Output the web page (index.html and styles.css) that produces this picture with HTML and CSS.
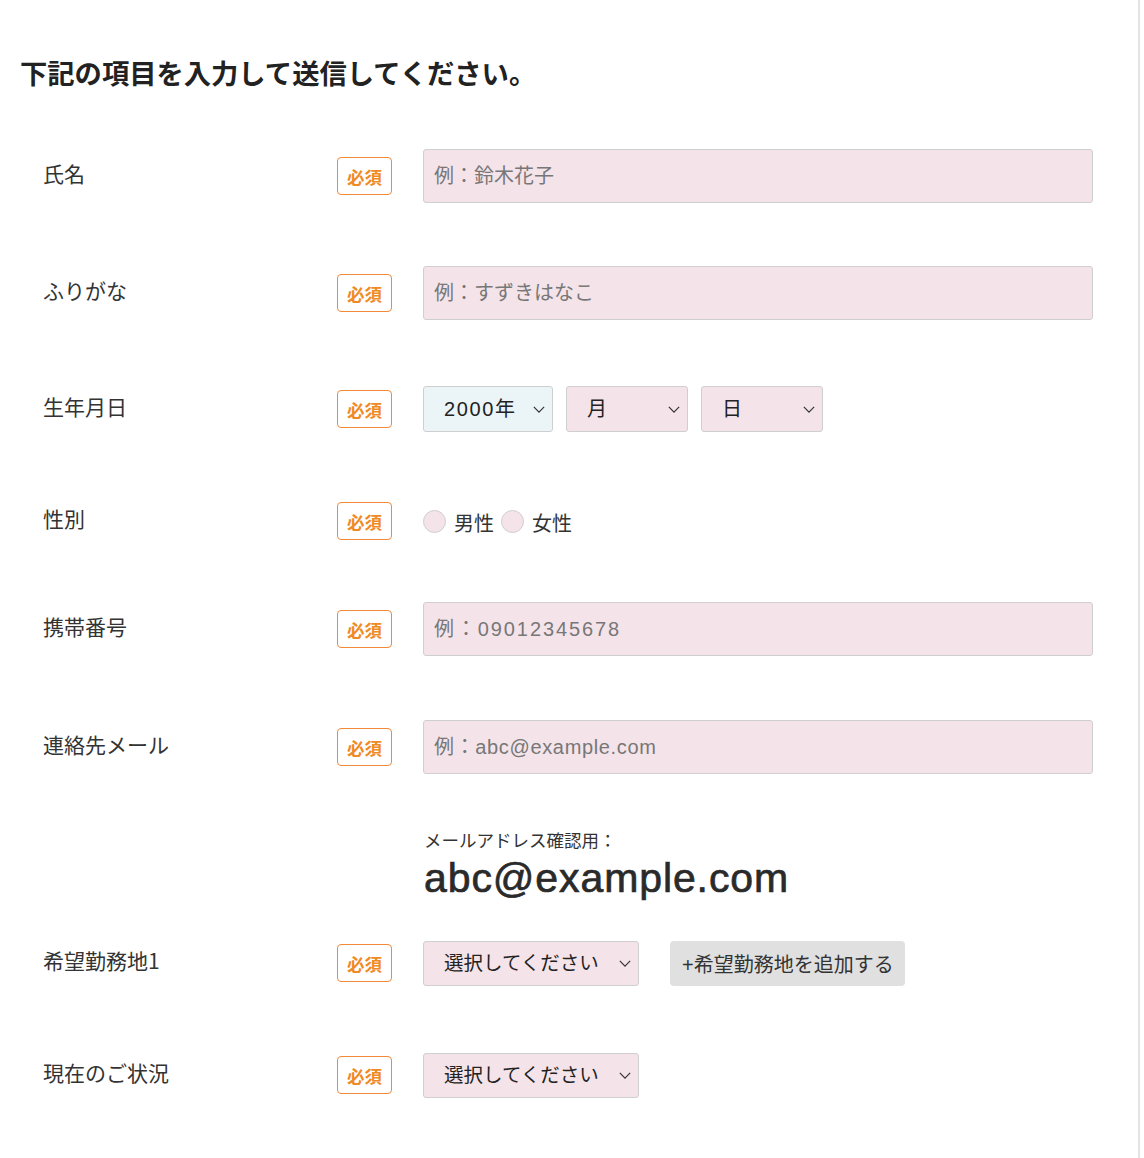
FILE: index.html
```html
<!DOCTYPE html>
<html lang="ja">
<head>
<meta charset="utf-8">
<title>フォーム</title>
<link rel="stylesheet" href="styles.css">
</head>
<body>
<div class="page">
  <h1 class="title">下記の項目を入力して送信してください。</h1>
  <form class="form">
    <div class="label">氏名</div>
    <div class="badge-cell"><span class="badge">必須</span></div>
    <div class="field"><input class="text-input" type="text" placeholder="例：鈴木花子"></div>

    <div class="label">ふりがな</div>
    <div class="badge-cell"><span class="badge">必須</span></div>
    <div class="field"><input class="text-input" type="text" placeholder="例：すずきはなこ"></div>

    <div class="label">生年月日</div>
    <div class="badge-cell"><span class="badge">必須</span></div>
    <div class="field field-inline">
      <div class="select-wrap select-year">
        <select class="select select-blue"><option>2000年</option></select>
        <svg class="chevron" viewBox="0 0 14 8" width="14" height="8"><path d="M1 1l6 6 6-6" fill="none" stroke="#333" stroke-width="1.4"/></svg>
      </div>
      <div class="select-wrap select-md">
        <select class="select"><option>月</option></select>
        <svg class="chevron" viewBox="0 0 14 8" width="14" height="8"><path d="M1 1l6 6 6-6" fill="none" stroke="#333" stroke-width="1.4"/></svg>
      </div>
      <div class="select-wrap select-md">
        <select class="select"><option>日</option></select>
        <svg class="chevron" viewBox="0 0 14 8" width="14" height="8"><path d="M1 1l6 6 6-6" fill="none" stroke="#333" stroke-width="1.4"/></svg>
      </div>
    </div>

    <div class="label">性別</div>
    <div class="badge-cell"><span class="badge">必須</span></div>
    <div class="field radios">
      <label class="radio"><span class="radio-dot"></span><span class="radio-text">男性</span></label>
      <label class="radio"><span class="radio-dot"></span><span class="radio-text">女性</span></label>
    </div>

    <div class="label">携帯番号</div>
    <div class="badge-cell"><span class="badge">必須</span></div>
    <div class="field"><input class="text-input tel" type="tel" placeholder="例：09012345678"></div>

    <div class="label">連絡先メール</div>
    <div class="badge-cell"><span class="badge">必須</span></div>
    <div class="field"><input class="text-input email" type="email" placeholder="例：abc@example.com"></div>

    <div class="confirm">
      <div class="confirm-caption">メールアドレス確認用：</div>
      <div class="confirm-mail">abc@example.com</div>
    </div>

    <div class="label">希望勤務地1</div>
    <div class="badge-cell"><span class="badge">必須</span></div>
    <div class="field field-inline wide-gap">
      <div class="select-wrap select-lg">
        <select class="select"><option>選択してください</option></select>
        <svg class="chevron" viewBox="0 0 14 8" width="14" height="8"><path d="M1 1l6 6 6-6" fill="none" stroke="#333" stroke-width="1.4"/></svg>
      </div>
      <button class="add-btn" type="button">+希望勤務地を追加する</button>
    </div>

    <div class="label">現在のご状況</div>
    <div class="badge-cell"><span class="badge">必須</span></div>
    <div class="field field-inline">
      <div class="select-wrap select-lg">
        <select class="select"><option>選択してください</option></select>
        <svg class="chevron" viewBox="0 0 14 8" width="14" height="8"><path d="M1 1l6 6 6-6" fill="none" stroke="#333" stroke-width="1.4"/></svg>
      </div>
    </div>
  </form>
</div>
</body>
</html>
```

FILE: styles.css
```css
html, body {
  margin: 0;
  padding: 0;
  background: #fff;
}

body {
  font-family: "Liberation Sans", "Noto Sans CJK JP", sans-serif;
  color: #333;
}

.page {
  box-sizing: border-box;
  width: 1140px;
  min-height: 100vh;
  border-right: 2px solid #e4e4e4;
  padding: 52px 0 0 20px;
}

.title {
  margin: 0 0 26px;
  font-size: 27.3px;
  line-height: 40px;
  font-weight: 700;
  color: #222;
  font-family: "Noto Sans CJK JP", sans-serif;
}

.form {
  display: grid;
  margin-left: 23px;
  grid-template-columns: 294px 86px 670px;
  grid-template-rows: 116px 118px 114px 110px 106px 130px 94px 114px 110px;
}

.label {
  display: flex;
  align-items: center;
  padding-bottom: 6px;
  font-size: 21px;
  color: #333;
  font-family: "Noto Sans CJK JP", sans-serif;
}

.badge-cell {
  display: flex;
  align-items: center;
}

.badge {
  box-sizing: border-box;
  width: 55px;
  height: 38px;
  border: 1px solid #f0893a;
  border-radius: 4px;
  display: flex;
  align-items: center;
  justify-content: center;
  color: #f08a24;
  font-weight: 700;
  font-size: 17.5px;
  font-family: "Noto Sans CJK JP", sans-serif;
}

.field {
  display: flex;
  align-items: center;
}

.field-inline {
  gap: 13px;
}

.wide-gap {
  gap: 31px;
}

.text-input {
  box-sizing: border-box;
  width: 670px;
  height: 54px;
  margin: 0;
  padding: 0 10px;
  border: 1px solid #cfcfcf;
  border-radius: 3px;
  background: #f4e4ea;
  font-family: "Liberation Sans", "Noto Sans CJK JP", sans-serif;
  font-size: 20px;
  color: #333;
  outline: none;
}

.text-input::placeholder {
  color: #777;
  opacity: 1;
}

.email::placeholder {
  letter-spacing: 0.65px;
}

.tel::placeholder {
  letter-spacing: 1.9px;
}

.select-wrap {
  position: relative;
  height: 46px;
}

.select-year { width: 130px; }
.select-md { width: 122px; }
.select-lg { width: 216px; height: 45px; }

.select {
  -webkit-appearance: none;
  appearance: none;
  box-sizing: border-box;
  width: 100%;
  height: 100%;
  margin: 0;
  padding: 0 0 0 20px;
  border: 1px solid #cfcfcf;
  border-radius: 3px;
  background: #f4e4ea;
  font-family: "Liberation Sans", "Noto Sans CJK JP", sans-serif;
  font-size: 20px;
  color: #222;
  outline: none;
}

.select-lg .select {
  font-size: 19.5px;
}

.select-blue {
  background: #ebf4f7;
  letter-spacing: 1.6px;
}

.chevron {
  position: absolute;
  right: 8px;
  top: 50%;
  margin-top: -3px;
  width: 12px;
  height: 7px;
  pointer-events: none;
}

.radios {
  gap: 7px;
}

.radio {
  display: flex;
  align-items: center;
  gap: 8px;
  font-size: 20px;
  font-family: "Noto Sans CJK JP", sans-serif;
  color: #333;
}

.radio-text {
  padding-top: 3px;
}

.radio-dot {
  box-sizing: border-box;
  width: 23px;
  height: 23px;
  border-radius: 50%;
  border: 1px solid #cfcfcf;
  background: #f4e4ea;
}

.add-btn {
  box-sizing: border-box;
  width: 235px;
  height: 45px;
  margin: 0;
  padding: 0 0 0 12px;
  text-align: left;
  border: none;
  border-radius: 4px;
  background: #e0e0e0;
  font-family: "Liberation Sans", "Noto Sans CJK JP", sans-serif;
  font-size: 20px;
  color: #333;
}

.confirm {
  grid-column: 3;
  padding-top: 18px;
  padding-left: 1px;
}

.confirm-caption {
  font-size: 17.5px;
  line-height: 20px;
  color: #333;
  font-family: "Noto Sans CJK JP", sans-serif;
}

.confirm-mail {
  margin-top: 6px;
  font-size: 41px;
  line-height: 44px;
  letter-spacing: 0.9px;
  color: #2a2a2a;
  font-family: "Liberation Sans", sans-serif;
  -webkit-text-stroke: 0.7px #2a2a2a;
}
```
